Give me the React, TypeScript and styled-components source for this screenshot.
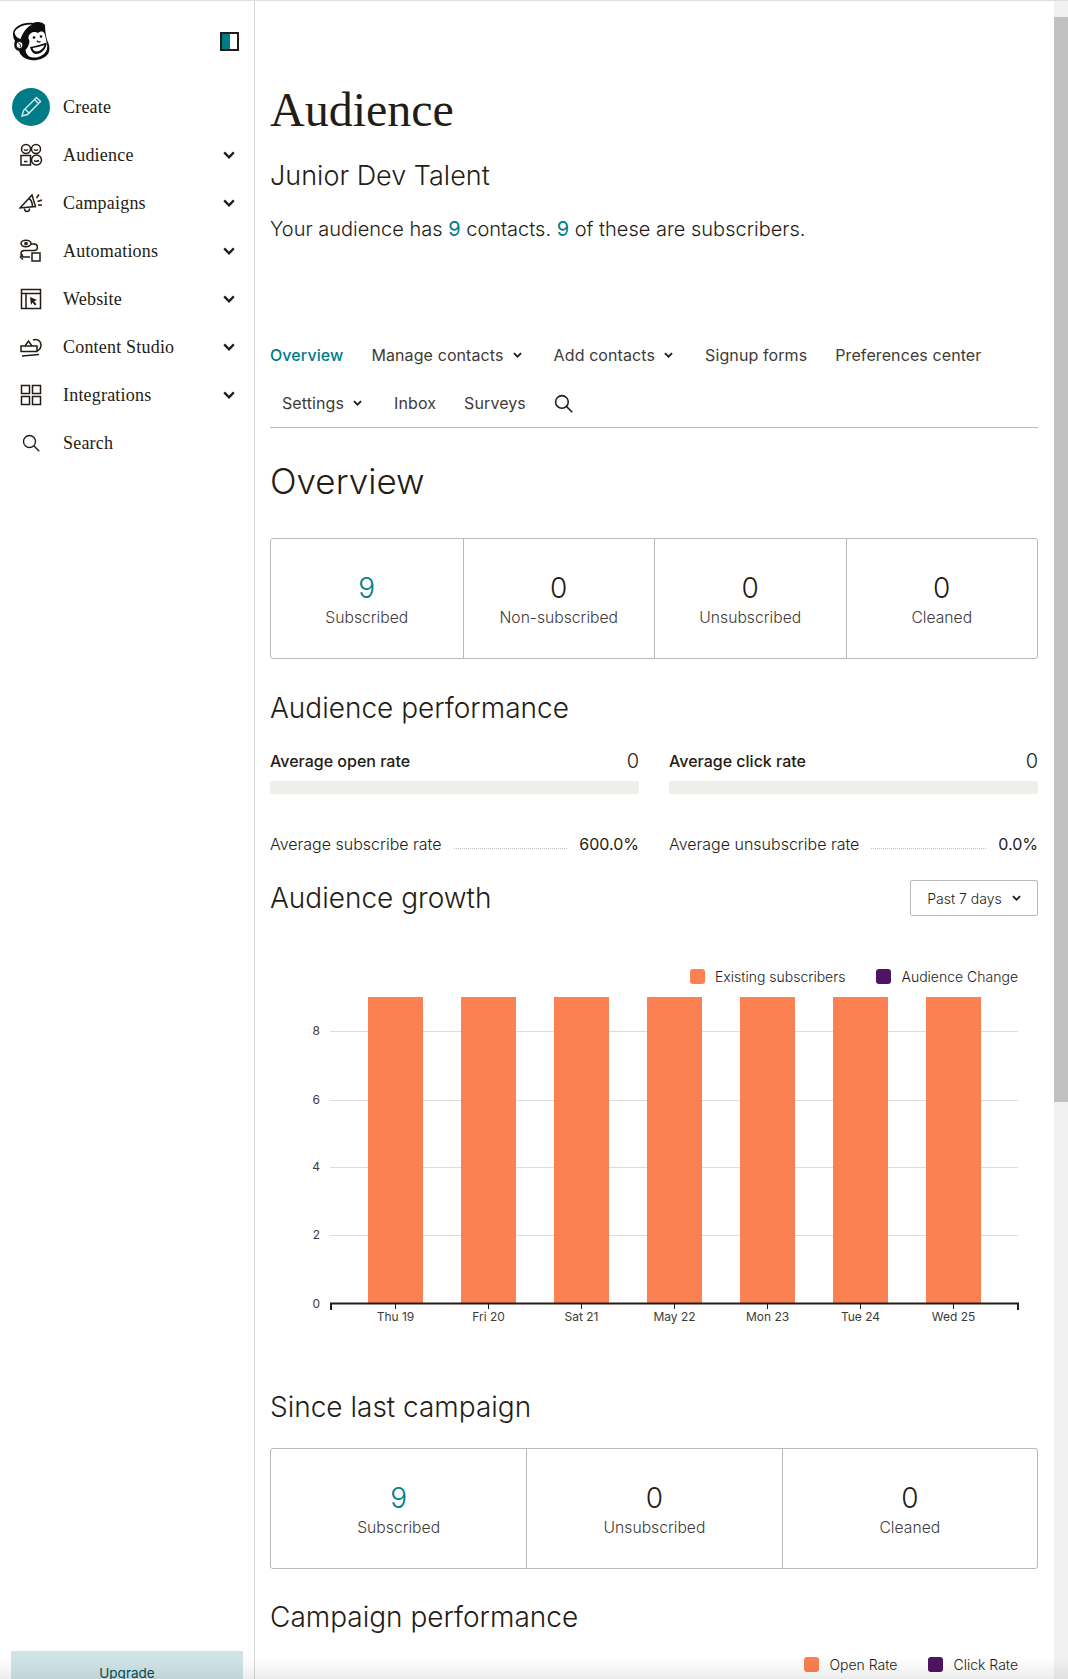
import React from "react";
import styled, { createGlobalStyle } from "styled-components";

const Global = createGlobalStyle`
  html, body { margin: 0; padding: 0; height: 100%; overflow: hidden; background: #fff; }
  * { box-sizing: border-box; }
`;

const SANS = `Inter, "Liberation Sans", sans-serif`;
const SERIF = `"Liberation Serif", Georgia, serif`;
const INK = "#241c15";
const TEAL = "#007c89";

const Page = styled.div`
  position: relative;
  width: 1068px;
  height: 1679px;
  display: flex;
  overflow: hidden;
  border-top: 1px solid #dedede;
  font-family: ${SANS};
  color: ${INK};
`;

const Sidebar = styled.aside`
  width: 255px;
  flex: none;
  border-right: 1px solid #d8d8d8;
  display: flex;
  flex-direction: column;
`;

const SideTop = styled.div`
  height: 70px;
  padding: 20px 15px 0 12px;
  display: flex;
  justify-content: space-between;
  align-items: flex-start;
`;

const Collapse = styled.div`
  width: 19px;
  height: 19px;
  margin-top: 11px;
  border: 2px solid ${INK};
  background: linear-gradient(90deg, ${TEAL} 50%, #fff 50%);
`;

const NavList = styled.nav`
  display: flex;
  flex-direction: column;
  padding-top: 12px;
`;

const NavRow = styled.div`
  height: 48px;
  padding: 0 19px 0 12px;
  display: flex;
  align-items: center;
  font-family: ${SERIF};
  font-size: 18px;
  letter-spacing: 0.2px;
`;

const NavIcon = styled.span`
  width: 38px;
  height: 38px;
  flex: none;
  margin-right: 13px;
  display: flex;
  align-items: center;
  justify-content: center;
`;

const CreateIcon = styled(NavIcon)`
  border-radius: 50%;
  background: ${TEAL};
`;

const NavLabel = styled.span`
  flex: 1;
`;

const UpgradeWrap = styled.div`
  margin-top: auto;
  padding: 0 11px;
`;

const Upgrade = styled.div`
  height: 28px;
  padding-top: 13px;
  background: #d0e4e7;
  color: #004e56;
  font-size: 13.5px;
  line-height: 18px;
  text-align: center;
`;

const Main = styled.main`
  flex: 1;
  min-width: 0;
  padding: 0 30px 0 15px;
`;

const Title = styled.h1`
  margin: 81px 0 0;
  font-family: ${SERIF};
  font-weight: 400;
  font-size: 48px;
  line-height: 55px;
`;

const Sub = styled.h2`
  margin: 23px 0 0;
  font-weight: 300;
  font-size: 27px;
  line-height: 32px;
`;

const Lead = styled.p`
  margin: 23px 0 0;
  font-size: 20px;
  font-weight: 300;
  line-height: 28px;
`;

const Em = styled.span`
  color: ${TEAL};
  font-weight: 400;
`;

const Tabs = styled.div`
  margin-top: 88px;
  border-bottom: 1px solid #b9b9b9;
  display: flex;
  flex-wrap: wrap;
  justify-content: flex-start;
`;

const Tab = styled.div<{ $active?: boolean; $inset?: boolean; $menu?: boolean }>`
  height: 48px;
  display: flex;
  align-items: center;
  gap: 9px;
  margin-right: ${(p) => (p.$menu ? "32px" : "28px")};
  margin-left: ${(p) => (p.$inset ? "12px" : "0")};
  font-size: 16px;
  letter-spacing: 0.1px;
  font-weight: ${(p) => (p.$active ? 500 : 400)};
  color: ${(p) => (p.$active ? TEAL : "#403b37")};
`;

const RowBreak = styled.div`
  flex-basis: 100%;
  height: 0;
`;

const SectionBig = styled.h2`
  margin: 32px 0 0;
  font-weight: 300;
  font-size: 35px;
  line-height: 42px;
`;

const Section = styled.h3<{ $top: number }>`
  margin: ${(p) => p.$top}px 0 0;
  font-weight: 300;
  font-size: 28px;
  line-height: 34px;
`;

const StatBox = styled.div<{ $cols: number; $top: number }>`
  margin-top: ${(p) => p.$top}px;
  height: 121px;
  display: grid;
  grid-template-columns: repeat(${(p) => p.$cols}, 1fr);
  border: 1px solid #b9b9b9;
  border-radius: 3px;
`;

const Stat = styled.div`
  display: flex;
  flex-direction: column;
  align-items: center;
  padding-top: 34px;
  border-left: 1px solid #b9b9b9;
  &:first-child { border-left: 0; }
`;

const StatNum = styled.div<{ $accent?: boolean }>`
  font-size: 28px;
  font-weight: 300;
  line-height: 30px;
  color: ${(p) => (p.$accent ? TEAL : INK)};
`;

const StatLabel = styled.div`
  margin-top: 1px;
  font-size: 15.7px;
  font-weight: 300;
  line-height: 28px;
  color: #403b37;
`;

const Perf = styled.div`
  margin-top: 24px;
  display: grid;
  grid-template-columns: 1fr 1fr;
  column-gap: 30px;
`;

const MeterHead = styled.div`
  display: flex;
  justify-content: space-between;
  align-items: center;
  height: 24px;
  font-size: 16px;
  font-weight: 500;
`;

const MeterValue = styled.span`
  font-size: 20px;
  font-weight: 300;
`;

const Meter = styled.div`
  margin-top: 8px;
  height: 13px;
  background: #efeeea;
  border-radius: 2px;
`;

const RateRow = styled.div`
  margin-top: 38px;
  display: flex;
  align-items: center;
  height: 24px;
  font-size: 16px;
  font-weight: 300;
`;

const Dots = styled.span`
  flex: 1;
  margin: 9px 12px 0;
  border-bottom: 1px dotted #c4c4c4;
`;

const RateValue = styled.span`
  font-weight: 400;
`;

const GrowthHead = styled.div`
  margin-top: 24px;
  display: flex;
  justify-content: space-between;
  align-items: center;
  height: 36px;
`;

const Select = styled.div`
  width: 128px;
  height: 36px;
  border: 1px solid #b9b9b9;
  border-radius: 2px;
  display: flex;
  align-items: center;
  justify-content: center;
  gap: 10px;
  font-size: 14px;
  font-weight: 300;
`;

const SectionFlat = styled(Section)`
  margin: 0;
`;

const Legend = styled.div<{ $top: number }>`
  margin-top: ${(p) => p.$top}px;
  padding-right: 20px;
  display: flex;
  justify-content: flex-end;
  gap: 31px;
  height: 18px;
  align-items: center;
  font-size: 14px;
  font-weight: 300;
`;

const LegendItem = styled.span`
  display: flex;
  align-items: center;
  gap: 10px;
`;

const Swatch = styled.i<{ $c: string }>`
  width: 15px;
  height: 15px;
  border-radius: 3px;
  background: ${(p) => p.$c};
`;

const ChartSvg = styled.svg`
  display: block;
  margin-top: 7px;
  font-family: ${SANS};
`;

const ScrollBar = styled.div`
  position: absolute;
  top: 0;
  right: 0;
  bottom: 0;
  width: 14px;
  background: #f1f1f1;
`;

const ScrollThumb = styled.div`
  height: 1085px;
  margin-top: 16px;
  background: #c1c1c1;
`;

const BottomFade = styled.div`
  position: absolute;
  left: 0;
  right: 0;
  bottom: 0;
  height: 22px;
  background: linear-gradient(rgba(0, 0, 0, 0), rgba(0, 0, 0, 0.07));
`;

const Chevron = ({ size = 10, w = 2 }: { size?: number; w?: number }) => (
  <svg width={size} height={size * 0.7} viewBox="0 0 10 7" fill="none">
    <path d="M1 1.2 5 5.2 9 1.2" stroke={INK} strokeWidth={w} />
  </svg>
);

const stroke = { fill: "none", stroke: INK, strokeWidth: 1.5 } as const;

const Freddie = () => (
  <svg width="38" height="40" viewBox="0 0 38 40">
    <path d="M1 12C2 6 10 1 21 2 25 0 31 1 33 4 33 10 34 15 35 19 38 24 38 30 36 33 32 38 25 40 19 39 12 38 8 34 7 30 3 29 1 25 3 20 1 17 1 14 1 12Z" fill="#0c0c0c" />
    <path d="M2.500 11.500C4 7 11 3 20 3.500 15 6 11 11 8.500 18 5 17 3 15 2.500 11.500Z" fill="#fff" />
    <path d="M18 13C21 10 24 11 26 12 30 9 33 11 33.500 16 34 20 36 24 35 28 33 34 27 37 21 36.500 16 36 14 33 13.500 29 16 26 17 24 17.500 20 16 17 16 15 18 13Z" fill="#fff" />
    <path d="M18 26C23 25 29 24 34.500 21.500 35 27 30 33 24 33 21 33 19 30 18 26Z" fill="#0c0c0c" />
    <path d="M20.500 27C24 26.500 28.500 25.500 32.500 24 31.500 27.500 28 30.500 24.500 30.500 22.500 30.500 21 29 20.500 27Z" fill="#fff" />
    <circle cx="7.500" cy="24" r="3.500" fill="#fff" stroke="#0c0c0c" strokeWidth="1" />
    <path d="M6.500 22.500c2 .5 2.500 2 1.500 3.500" fill="none" stroke="#0c0c0c" strokeWidth="1" />
    <circle cx="22" cy="16.500" r="1.300" fill="#0c0c0c" />
    <circle cx="29" cy="15.500" r="1.300" fill="#0c0c0c" />
    <path d="M25 19.500C25.500 21 27 21.500 28.500 20.500" fill="none" stroke="#0c0c0c" strokeWidth="1.200" />
  </svg>
);

const Pencil = () => (
  <svg width="24" height="24" viewBox="0 0 24 24" fill="none" stroke="#d7ecee" strokeWidth="1.400">
    <path d="M3 21 4.500 15.500 17.500 2.500 21.500 6.500 8.500 19.500Z" />
    <path d="M15.500 4.500 19.500 8.500M6 14l4 4" />
  </svg>
);

const AudienceIcon = () => (
  <svg width="24" height="24" viewBox="0 0 24 24" {...stroke}>
    <circle cx="7" cy="6" r="4.500" />
    <circle cx="17" cy="6" r="4.500" />
    <rect x="2" y="12.500" width="9.500" height="9.500" />
    <circle cx="17.500" cy="17" r="5" />
    <path d="M5 6.500c1 1 3 1 4 0M15 6.500c1 1 3 1 4 0M5 18.500h3.500M15 17.500c1 1 3 1 5 0" />
  </svg>
);

const CampaignIcon = () => (
  <svg width="24" height="24" viewBox="0 0 24 24" {...stroke}>
    <path d="M1 17 13 4l3.500 11.500L1 17Z" />
    <path d="M10 7.500c2.500 1.500 3.500 4 3.500 8.500" />
    <path d="M5.500 17.500c0 2 1 3 2.500 3s2.500-1 2.500-3" />
    <path d="M17.500 7 20 3.500M18.500 10.500 23 9M19 14h4" />
  </svg>
);

const AutomationIcon = () => (
  <svg width="24" height="24" viewBox="0 0 24 24" {...stroke}>
    <ellipse cx="7" cy="4.500" rx="5" ry="3.200" />
    <circle cx="7" cy="4.500" r="1.100" />
    <path d="M12 5h3c4.500 0 4.500 6.500 0 6.500H5c-4 0-4 6.500 0 6.500h6M4 15.500 1.500 18 4 20.500" />
    <rect x="13" y="14" width="8" height="8" />
  </svg>
);

const WebsiteIcon = () => (
  <svg width="24" height="24" viewBox="0 0 24 24" {...stroke}>
    <rect x="2.500" y="2.500" width="19" height="19" />
    <path d="M2.500 6.500h19M7 6.500v15" />
    <path d="M11 10l7 3-3 1.200 2.500 3-1.500 1.200-2.500-3-1.500 2.600Z" fill={INK} stroke="none" />
  </svg>
);

const StudioIcon = () => (
  <svg width="24" height="24" viewBox="0 0 24 24" {...stroke}>
    <path d="M2 11h16v5.500H2Z" />
    <path d="M6 11l3.500-5 3.500 5" />
    <path d="M3 21l17-1.500" />
    <path d="M14 5c4-1.500 8 1 8 5 0 3-1.500 5-4 6" />
  </svg>
);

const IntegrationIcon = () => (
  <svg width="24" height="24" viewBox="0 0 24 24" {...stroke}>
    <rect x="2.500" y="2.500" width="8" height="8" />
    <rect x="13.500" y="2.500" width="8" height="8" />
    <rect x="2.500" y="13.500" width="8" height="8" />
    <rect x="13.500" y="13.500" width="8" height="8" />
  </svg>
);

const SearchIcon = ({ size = 24, w = 1.500 }: { size?: number; w?: number }) => (
  <svg width={size} height={size} viewBox="0 0 24 24" fill="none" stroke={INK} strokeWidth={w}>
    <circle cx="10" cy="10" r="8" />
    <path d="M16 16 23 23" />
  </svg>
);

const navItems: [string, React.ReactNode, boolean][] = [
  ["Audience", <AudienceIcon />, true],
  ["Campaigns", <CampaignIcon />, true],
  ["Automations", <AutomationIcon />, true],
  ["Website", <WebsiteIcon />, true],
  ["Content Studio", <StudioIcon />, true],
  ["Integrations", <IntegrationIcon />, true],
  ["Search", <SearchIcon size={18} w={1.8} />, false],
];

const days = ["Thu 19", "Fri 20", "Sat 21", "May 22", "Mon 23", "Tue 24", "Wed 25"];
const ORIGIN_X = 270;
const ORIGIN_Y = 992;

const Chart = () => (
  <ChartSvg width="769" height="340" viewBox={`${ORIGIN_X} ${ORIGIN_Y} 769 340`}>
    {[
      [8, 1031],
      [6, 1100],
      [4, 1167],
      [2, 1235],
    ].map(([v, y]) => (
      <g key={v}>
        <line x1="330" x2="1018" y1={y + 0.5} y2={y + 0.5} stroke="#dcdcdc" />
        <text x="320" y={y + 4} textAnchor="end" fontSize="12" fill="#403b37">{v}</text>
      </g>
    ))}
    <text x="320" y="1308" textAnchor="end" fontSize="12" fill="#403b37">0</text>
    {days.map((d, i) => {
      const x = 368 + i * 93;
      return (
        <g key={d}>
          <rect x={x} y="997" width="55" height="306" fill="#fb8052" />
          <line x1={x + 27.5} x2={x + 27.5} y1="1303" y2="1309" stroke={INK} />
          <text x={x + 27.5} y="1321" textAnchor="middle" fontSize="12" fill="#403b37">{d}</text>
        </g>
      );
    })}
    <path d="M331 1310V1303.500H1018V1310" fill="none" stroke={INK} strokeWidth="2" />
  </ChartSvg>
);

const Rate = ({ label, value }: { label: string; value: string }) => (
  <RateRow>
    {label}
    <Dots />
    <RateValue>{value}</RateValue>
  </RateRow>
);

export default function App() {
  return (
    <Page>
      <Global />
      <Sidebar>
        <SideTop>
          <Freddie />
          <Collapse />
        </SideTop>
        <NavList>
          <NavRow>
            <CreateIcon><Pencil /></CreateIcon>
            <NavLabel>Create</NavLabel>
          </NavRow>
          {navItems.map(([label, icon, more]) => (
            <NavRow key={label}>
              <NavIcon>{icon}</NavIcon>
              <NavLabel>{label}</NavLabel>
              {more && <Chevron size={12} />}
            </NavRow>
          ))}
        </NavList>
        <UpgradeWrap>
          <Upgrade>Upgrade</Upgrade>
        </UpgradeWrap>
      </Sidebar>
      <Main>
        <Title>Audience</Title>
        <Sub>Junior Dev Talent</Sub>
        <Lead>
          Your audience has <Em>9</Em> contacts. <Em>9</Em> of these are subscribers.
        </Lead>
        <Tabs>
          <Tab $active>Overview</Tab>
          <Tab $menu>Manage contacts <Chevron size={9} /></Tab>
          <Tab $menu>Add contacts <Chevron size={9} /></Tab>
          <Tab>Signup forms</Tab>
          <Tab>Preferences center</Tab>
          <RowBreak />
          <Tab $inset $menu>Settings <Chevron size={9} /></Tab>
          <Tab>Inbox</Tab>
          <Tab>Surveys</Tab>
          <Tab><SearchIcon size={19} w={2} /></Tab>
        </Tabs>
        <SectionBig>Overview</SectionBig>
        <StatBox $cols={4} $top={36}>
          <Stat><StatNum $accent>9</StatNum><StatLabel>Subscribed</StatLabel></Stat>
          <Stat><StatNum>0</StatNum><StatLabel>Non-subscribed</StatLabel></Stat>
          <Stat><StatNum>0</StatNum><StatLabel>Unsubscribed</StatLabel></Stat>
          <Stat><StatNum>0</StatNum><StatLabel>Cleaned</StatLabel></Stat>
        </StatBox>
        <Section $top={32}>Audience performance</Section>
        <Perf>
          <div>
            <MeterHead>Average open rate <MeterValue>0</MeterValue></MeterHead>
            <Meter />
            <Rate label="Average subscribe rate" value="600.0%" />
          </div>
          <div>
            <MeterHead>Average click rate <MeterValue>0</MeterValue></MeterHead>
            <Meter />
            <Rate label="Average unsubscribe rate" value="0.0%" />
          </div>
        </Perf>
        <GrowthHead>
          <SectionFlat $top={0}>Audience growth</SectionFlat>
          <Select>Past 7 days <Chevron size={9} /></Select>
        </GrowthHead>
        <Legend $top={51}>
          <LegendItem><Swatch $c="#fb8052" />Existing subscribers</LegendItem>
          <LegendItem><Swatch $c="#4f1461" />Audience Change</LegendItem>
        </Legend>
        <Chart />
        <Section $top={58}>Since last campaign</Section>
        <StatBox $cols={3} $top={24}>
          <Stat><StatNum $accent>9</StatNum><StatLabel>Subscribed</StatLabel></Stat>
          <Stat><StatNum>0</StatNum><StatLabel>Unsubscribed</StatLabel></Stat>
          <Stat><StatNum>0</StatNum><StatLabel>Cleaned</StatLabel></Stat>
        </StatBox>
        <Section $top={31}>Campaign performance</Section>
        <Legend $top={21}>
          <LegendItem><Swatch $c="#fb8052" />Open Rate</LegendItem>
          <LegendItem><Swatch $c="#4f1461" />Click Rate</LegendItem>
        </Legend>
      </Main>
      <ScrollBar><ScrollThumb /></ScrollBar>
      <BottomFade />
    </Page>
  );
}
